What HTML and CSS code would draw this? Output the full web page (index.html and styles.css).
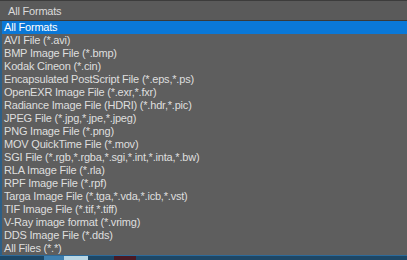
FILE: index.html
```html
<!DOCTYPE html>
<html lang="en">
<head>
    <meta charset="UTF-8">
    <title>Formats</title>
    <link rel="stylesheet" href="styles.css">
</head>
<body>
    <div class="combo">All Formats</div>
    <ul class="list">
        <li class="selected">All Formats</li>
        <li>AVI File (*.avi)</li>
        <li>BMP Image File (*.bmp)</li>
        <li>Kodak Cineon (*.cin)</li>
        <li>Encapsulated PostScript File (*.eps,*.ps)</li>
        <li>OpenEXR Image File (*.exr,*.fxr)</li>
        <li>Radiance Image File (HDRI) (*.hdr,*.pic)</li>
        <li>JPEG File (*.jpg,*.jpe,*.jpeg)</li>
        <li>PNG Image File (*.png)</li>
        <li>MOV QuickTime File (*.mov)</li>
        <li>SGI File (*.rgb,*.rgba,*.sgi,*.int,*.inta,*.bw)</li>
        <li>RLA Image File (*.rla)</li>
        <li>RPF Image File (*.rpf)</li>
        <li>Targa Image File (*.tga,*.vda,*.icb,*.vst)</li>
        <li>TIF Image File (*.tif,*.tiff)</li>
        <li>V-Ray image format (*.vrimg)</li>
        <li>DDS Image File (*.dds)</li>
        <li>All Files (*.*)</li>
    </ul>
    <div class="taskbar">
        <span class="tb-a"></span>
        <span class="tb-b"></span>
        <span class="tb-c"></span>
    </div>
</body>
</html>
```

FILE: styles.css
```css
body { margin: 0; background: #5c5c5c; font-family: "Liberation Sans", Arial, sans-serif; font-size: 11px; letter-spacing: -0.2px; overflow: hidden; }
.combo { height: 19px; line-height: 21px; padding-left: 8px; color: #dadada; background: #5a5a5a; border-top: 1px solid #3c3c3c; border-bottom: 1px solid #3a3a3a; }
.list { list-style: none; margin: 0; padding: 0; background: #5e5e5e; border-left: 2px solid #2d5f86; }
.list li { height: 13px; line-height: 13px; padding-left: 2px; color: #dedede; white-space: nowrap; }
.list li.selected { background: #0a78d8; color: #ffffff; }
.taskbar { display: flex; height: 8px; background: #1d4766; border-top: 1px solid #2c6a9a; }
.tb-a { width: 20px; margin-left: 44px; background: #3f7fae; }
.tb-b { width: 24px; background: #b8d6e4; }
.tb-c { width: 22px; margin-left: 26px; background: #4a1a24; }
```
